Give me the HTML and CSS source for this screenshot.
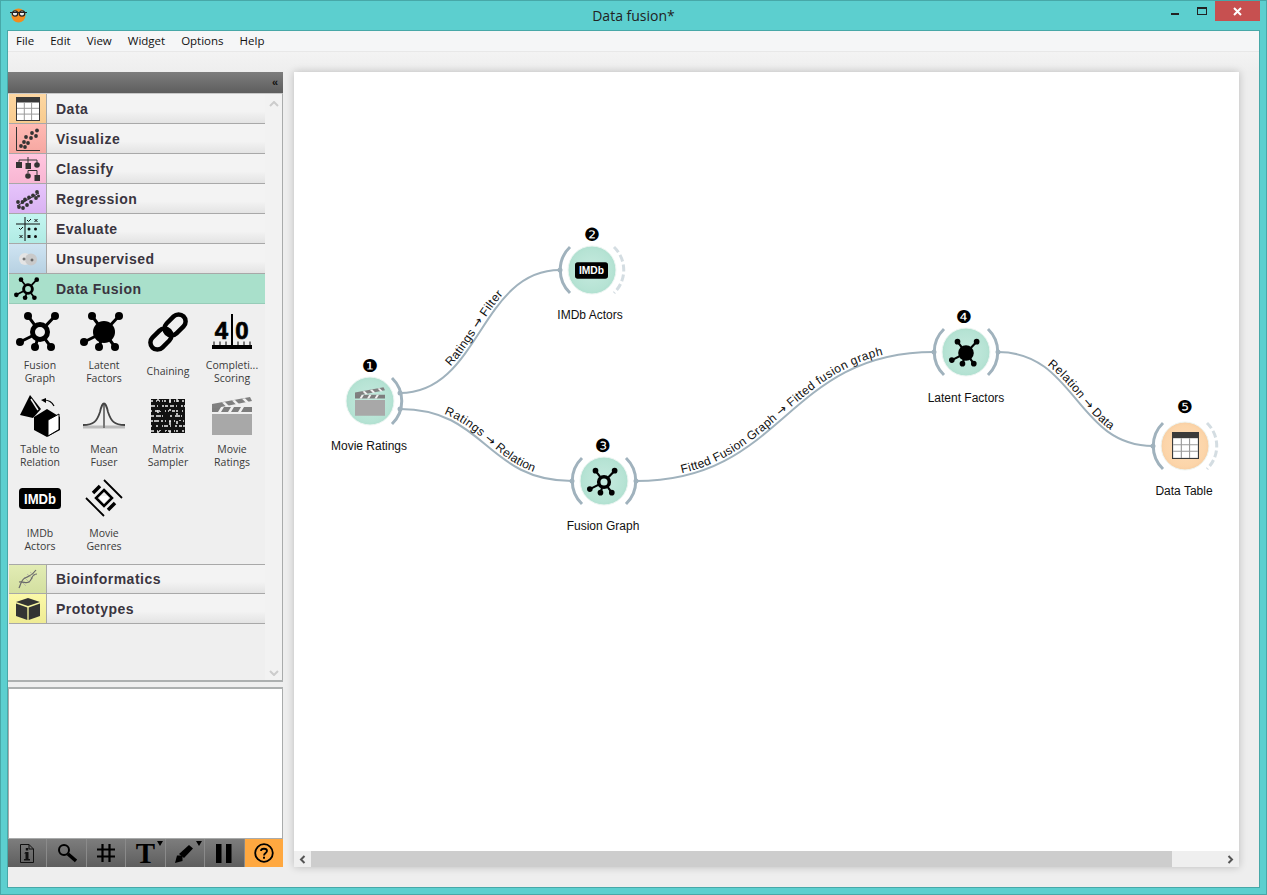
FILE: index.html
```html
<!DOCTYPE html>
<html lang="en">
<head>
    <meta charset="UTF-8">
    <title>Data fusion*</title>
    <link rel="stylesheet" href="styles.css">
</head>
<body>
<svg class="defs" width="0" height="0">
    <defs>
        <symbol id="fusion" viewBox="0 0 48 48">
            <path d="M18.600 16.800L12 8M30.200 17.400L39 8M16 28L4 34M21.200 32.500L19 39M29.300 31.300L35 39" stroke="#000" stroke-width="3"/>
            <circle cx="24" cy="24" r="7.500" fill="none" stroke="#000" stroke-width="5"/>
            <circle cx="12" cy="8" r="4"/><circle cx="39" cy="8" r="4"/><circle cx="4" cy="34" r="4"/>
            <circle cx="19" cy="39" r="4"/><circle cx="35" cy="39" r="4"/>
        </symbol>
        <symbol id="latent" viewBox="0 0 48 48">
            <path d="M24 24L12 8M24 24L39 8M24 24L4 34M24 24L19 39M24 24L35 39" stroke="#000" stroke-width="3"/>
            <circle cx="24" cy="24" r="11"/>
            <circle cx="12" cy="8" r="4"/><circle cx="39" cy="8" r="4"/><circle cx="4" cy="34" r="4"/>
            <circle cx="19" cy="39" r="4"/><circle cx="35" cy="39" r="4"/>
        </symbol>
        <symbol id="clapper" viewBox="0 0 40 38">
            <rect x="0" y="17" width="40" height="21" fill="#a8a8a8"/>
            <path d="M0 10H40V15H0Z" fill="#7d7d7d"/>
            <path d="M9 10l-3 5h3l3-5zM19 10l-3 5h3l3-5zM29 10l-3 5h3l3-5z" fill="#f1f1f1"/>
            <path d="M0 7l38-7 2 4-36 7-4 0z" fill="#808080"/>
            <path d="M10 5.500l4 4 3-.6-4-4zM20 3.600l4 4 3-.6-4-4zM30 1.800l4 4 3-.6-4-4z" fill="#f1f1f1"/>
        </symbol>
        <symbol id="imdb" viewBox="0 0 42 21">
            <rect width="42" height="21" rx="3.500"/>
            <text class="imdb-text" x="21" y="15.500" text-anchor="middle" textLength="32" lengthAdjust="spacingAndGlyphs">IMDb</text>
        </symbol>
        <symbol id="table" viewBox="0 0 24 24">
            <rect width="24" height="24" fill="#3a3a3a"/>
            <rect x="1" y="5.500" width="22" height="17.500" fill="#fff"/>
            <path d="M8.300 5.500V23M15.600 5.500V23M1 11.300H23M1 17.100H23" stroke="#9a9a9a" stroke-width="1"/>
        </symbol>
    </defs>
</svg>

<div class="window">
    <header class="titlebar">
        <svg class="app-icon" width="17" height="15" viewBox="0 0 17 15">
            <circle cx="8.500" cy="7.500" r="7" fill="#f28c1e"/>
            <circle cx="5" cy="5.500" r="2.700" fill="#eee" stroke="#222" stroke-width="1.200"/>
            <circle cx="12" cy="5.500" r="2.700" fill="#eee" stroke="#222" stroke-width="1.200"/>
            <path d="M0 4.500H17" stroke="#222"/>
        </svg>
        <span class="title">Data fusion*</span>
        <div class="win-btn min"><i></i></div>
        <div class="win-btn max"><i></i></div>
        <div class="win-btn close">
            <svg width="9" height="9" viewBox="0 0 9 9"><path d="M1 1L8 8M8 1L1 8" stroke="#fff" stroke-width="2"/></svg>
        </div>
    </header>

    <div class="client">
        <nav class="menubar">
            <span>File</span><span>Edit</span><span>View</span><span>Widget</span><span>Options</span><span>Help</span>
        </nav>

        <div class="main">
            <aside class="dock">
                <div class="dock-head">«</div>
                <div class="toolbox">
                    <div class="tool-list">
                        <div class="cat"><div class="cat-icon c-data"><svg width="24" height="24"><use href="#table"/></svg></div><span>Data</span></div>
                        <div class="cat"><div class="cat-icon c-vis">
                            <svg width="24" height="24" viewBox="0 0 24 24">
                                <path d="M.5 0V23.500H24" fill="none" stroke="#333"/>
                                <g fill="#333"><circle cx="5" cy="19" r="1.900"/><circle cx="9" cy="20" r="1.900"/><circle cx="8" cy="15" r="1.900"/><circle cx="12" cy="16" r="1.900"/><circle cx="10" cy="10" r="1.900"/><circle cx="15" cy="11" r="1.900"/><circle cx="16" cy="6" r="1.900"/><circle cx="20" cy="9" r="1.900"/><circle cx="21" cy="3.500" r="1.900"/></g>
                            </svg></div><span>Visualize</span></div>
                        <div class="cat"><div class="cat-icon c-cls">
                            <svg width="24" height="24" viewBox="0 0 24 24">
                                <path d="M3 7V3H21V7M12 0V8M12 16V13.500H21V18" fill="none" stroke="#333"/>
                                <g fill="#333"><rect x="0" y="5" width="6" height="6"/><rect x="9.500" y="6" width="5.500" height="6"/><circle cx="21" cy="8" r="2.800"/><circle cx="12" cy="19" r="2.800"/><rect x="18.500" y="18" width="5.500" height="6"/></g>
                            </svg></div><span>Classify</span></div>
                        <div class="cat"><div class="cat-icon c-reg">
                            <svg width="24" height="24" viewBox="0 0 24 24">
                                <path d="M1 19L23 6" stroke="#333" stroke-width="1"/>
                                <g fill="#333"><circle cx="2" cy="15" r="1.900"/><circle cx="3" cy="20" r="1.900"/><circle cx="6.500" cy="15" r="1.900"/><circle cx="7" cy="21" r="1.900"/><circle cx="9" cy="12.500" r="1.900"/><circle cx="11" cy="18" r="1.900"/><circle cx="13" cy="10.500" r="1.900"/><circle cx="15" cy="15" r="1.900"/><circle cx="17" cy="8.500" r="1.900"/><circle cx="20" cy="11" r="1.900"/><circle cx="21" cy="5" r="1.900"/><circle cx="22.500" cy="9" r="1.500"/></g>
                            </svg></div><span>Regression</span></div>
                        <div class="cat"><div class="cat-icon c-eval">
                            <svg width="24" height="24" viewBox="0 0 24 24">
                                <path d="M0 7H24M9 0V24" stroke="#111" stroke-width="1"/>
                                <path d="M11 3l1.500 1.500L15 2M3 11l1.500 1.500L7 10" fill="none" stroke="#111"/>
                                <path d="M18.500 2l3 3M21.500 2l-3 3M3.500 18l3 3M6.500 18l-3 3" stroke="#111"/>
                                <g fill="#111"><circle cx="13" cy="12" r="1.500"/><circle cx="19.500" cy="12" r="1.500"/><rect x="11.500" y="18" width="3" height="3"/><circle cx="19.500" cy="19.500" r="1.500"/></g>
                            </svg></div><span>Evaluate</span></div>
                        <div class="cat"><div class="cat-icon c-uns">
                            <svg width="24" height="24" viewBox="0 0 24 24">
                                <circle cx="9" cy="12" r="6" fill="#e4e4e4"/><circle cx="15" cy="12.500" r="6" fill="#c9c9c9"/>
                                <path d="M6.500 12h3M8 10.500v3M14.500 13h3M16 11.500v3" stroke="#333" stroke-width=".8"/>
                            </svg></div><span>Unsupervised</span></div>
                        <div class="cat cat-open"><div class="cat-icon"><svg width="28" height="28"><use href="#fusion"/></svg></div><span>Data Fusion</span></div>

                        <div class="widgets">
                            <div class="widget"><div class="w-icon"><svg width="48" height="48"><use href="#fusion"/></svg></div><div class="w-label">Fusion<br>Graph</div></div>
                            <div class="widget"><div class="w-icon"><svg width="48" height="48"><use href="#latent"/></svg></div><div class="w-label">Latent<br>Factors</div></div>
                            <div class="widget"><div class="w-icon">
                                <svg width="42" height="42" viewBox="0 0 42 42"><g fill="none" stroke="#000" stroke-width="4.500" transform="rotate(-45 21 21)"><rect x="-1" y="14" width="24" height="14" rx="7"/><rect x="19" y="14" width="24" height="14" rx="7"/></g></svg>
                            </div><div class="w-label">Chaining</div></div>
                            <div class="widget"><div class="w-icon">
                                <svg width="40" height="36" viewBox="0 0 40 36">
                                    <text class="score" x="9.500" y="25" text-anchor="middle">4</text>
                                    <text class="score" x="30" y="25" text-anchor="middle">0</text>
                                    <path d="M20 0V34" stroke="#000" stroke-width="2"/>
                                    <rect x="0" y="31" width="40" height="4"/>
                                    <path d="M2 27.500V31M8 27.500V31M14 27.500V31M26 27.500V31M32 27.500V31M38 27.500V31" stroke="#000"/>
                                </svg></div><div class="w-label">Completi...<br>Scoring</div></div>

                            <div class="widget"><div class="w-icon">
                                <svg width="42" height="42" viewBox="0 0 42 42">
                                    <path d="M11 0L1 20L14 23L22 14Z" fill="#000"/>
                                    <path d="M12 4L19 15" stroke="#f0f0f0" stroke-width="1.500"/>
                                    <path d="M25 5C29 5 33 7 35 11" fill="none" stroke="#000" stroke-width="1.200"/>
                                    <path d="M22 5l5-2v5z"/>
                                    <path d="M28 14L41 22V35L28 42L15 35V22Z" fill="#000"/>
                                    <path d="M29 25L40 19V34.500L29 41Z" fill="#fff" stroke="#000"/>
                                </svg></div><div class="w-label">Table to<br>Relation</div></div>
                            <div class="widget"><div class="w-icon">
                                <svg width="42" height="28" viewBox="0 0 42 28">
                                    <path d="M0 25H42" stroke="#bbb" stroke-width="3"/>
                                    <path d="M21 1V26" stroke="#777" stroke-width="2"/>
                                    <path d="M0 23C11 23 14 19 17 10C18 5 20 1.500 21 1.500C22 1.500 24 5 25 10C28 19 31 23 42 23" fill="none" stroke="#444" stroke-width="1.800"/>
                                </svg></div><div class="w-label">Mean<br>Fuser</div></div>
                            <div class="widget"><div class="w-icon">
                                <svg width="34" height="34" viewBox="0 0 34 34">
                                    <rect width="34" height="34" fill="#111"/>
                                    <g stroke="#eee" fill="none" stroke-width="1.500">
                                        <path d="M0 2H34" stroke-dasharray="2 3 1 2 4 1 2 3"/>
                                        <path d="M0 7H34" stroke-dasharray="4 2 1 4 2 1 3 2"/>
                                        <path d="M0 12H34" stroke-dasharray="1 3 3 1 2 4 1 2"/>
                                        <path d="M0 17H34" stroke-dasharray="3 2 5 1 1 3 2 2"/>
                                        <path d="M0 22H34" stroke-dasharray="2 1 3 4 2 2 1 3"/>
                                        <path d="M0 27H34" stroke-dasharray="1 4 2 2 3 1 4 2"/>
                                        <path d="M0 32H34" stroke-dasharray="3 3 1 1 2 4 2 1"/>
                                    </g>
                                    <g stroke="#111" fill="none" stroke-width="2">
                                        <path d="M4 0V34" stroke-dasharray="3 5 2 4 6 3"/>
                                        <path d="M10 0V34" stroke-dasharray="5 3 4 6 2 4"/>
                                        <path d="M16 0V34" stroke-dasharray="2 6 3 3 5 5"/>
                                        <path d="M22 0V34" stroke-dasharray="4 4 2 5 3 2"/>
                                        <path d="M29 0V34" stroke-dasharray="3 3 6 2 2 6"/>
                                    </g>
                                    <g stroke="#eee" fill="none" stroke-width="1.500">
                                        <path d="M7 0V34" stroke-dasharray="2 9 3 7"/>
                                        <path d="M19 0V34" stroke-dasharray="4 6 2 10"/>
                                        <path d="M26 0V34" stroke-dasharray="3 11 2 6"/>
                                    </g>
                                </svg></div><div class="w-label">Matrix<br>Sampler</div></div>
                            <div class="widget"><div class="w-icon"><svg width="40" height="38"><use href="#clapper"/></svg></div><div class="w-label">Movie<br>Ratings</div></div>

                            <div class="widget"><div class="w-icon"><svg class="w-imdb" width="42" height="21"><use href="#imdb"/></svg></div><div class="w-label">IMDb<br>Actors</div></div>
                            <div class="widget"><div class="w-icon">
                                <svg class="w-genres" width="38" height="38" viewBox="0 0 38 38">
                                    <path d="M1 19L19 37M19 1L37 19" stroke="#000" stroke-width="1.800"/>
                                    <path d="M8 14L15 7M23 31L30 24" stroke="#000" stroke-width="3.500"/>
                                    <path d="M19 11L27 19L19 27L11 19Z" fill="none" stroke="#000" stroke-width="2.500"/>
                                    <path d="M15 17h8v3l-4 4-4-4z" fill="#fff"/>
                                </svg></div><div class="w-label">Movie<br>Genres</div></div>
                        </div>

                        <div class="cat"><div class="cat-icon c-bio">
                            <svg width="24" height="24" viewBox="0 0 24 24">
                                <path d="M5 14l5 5M8 10l6 6M11 7l6 5M14 5l5 4" stroke="#b5b5a5" stroke-width=".9"/>
                                <path d="M3 21C5 17 5 13 9 11S16 9 20 3" fill="none" stroke="#6a6a6a" stroke-width="1.200"/>
                                <path d="M3 15C8 14 11 18 14 14S16 7 21 7" fill="none" stroke="#6a6a6a" stroke-width="1.200"/>
                            </svg></div><span>Bioinformatics</span></div>
                        <div class="cat"><div class="cat-icon c-pro">
                            <svg width="24" height="22" viewBox="0 0 24 22">
                                <path d="M12 0L24 4L12 8L0 4Z" fill="#333"/>
                                <path d="M0 5.500L11.300 9.500V22L0 18Z" fill="#333"/>
                                <path d="M24 5.500L12.700 9.500V22L24 18Z" fill="#333"/>
                            </svg></div><span>Prototypes</span></div>
                    </div>
                    <div class="vscroll">
                        <svg width="10" height="6" viewBox="0 0 10 6"><path d="M1 5L5 1L9 5" fill="none" stroke="#ccc" stroke-width="2"/></svg>
                        <svg width="10" height="6" viewBox="0 0 10 6"><path d="M1 1L5 5L9 1" fill="none" stroke="#ccc" stroke-width="2"/></svg>
                    </div>
                </div>
                <div class="splitter"></div>
                <div class="info-box"></div>
                <div class="dock-tools">
                    <div class="tool">
                        <svg width="14" height="19" viewBox="0 0 14 19"><path d="M.5.500H9L13.500 5V18.500H.5Z" fill="none" stroke="#111"/><path d="M9 .5V5H13.500" fill="none" stroke="#111"/><path d="M5.500 8h3v7h1.500v1.500H4V15h1.500V9.500H4zM5.800 4h2.500v2.500H5.800z" fill="#111"/></svg>
                    </div>
                    <div class="tool">
                        <svg width="20" height="20" viewBox="0 0 20 20"><circle cx="7" cy="7" r="5" fill="none" stroke="#000" stroke-width="2"/><path d="M11 11L19 18" stroke="#000" stroke-width="3.500"/></svg>
                    </div>
                    <div class="tool">
                        <svg width="20" height="20" viewBox="0 0 20 20"><path d="M6.500 1V19M13.500 1V19M1 6.500H19M1 13.500H19" stroke="#000" stroke-width="2.200"/></svg>
                    </div>
                    <div class="tool">
                        <span class="tool-t">T</span><i class="caret"></i>
                    </div>
                    <div class="tool">
                        <svg width="20" height="20" viewBox="0 0 20 20"><path d="M0 20L2 12.500L7.500 12.500L7.500 18Z" fill="#000"/><path d="M4 11L14 2L18 5.500L9 15Z" fill="#000"/></svg><i class="caret"></i>
                    </div>
                    <div class="tool">
                        <svg width="16" height="19" viewBox="0 0 16 19"><rect width="5.500" height="19"/><rect x="10" width="5.500" height="19"/></svg>
                    </div>
                    <div class="tool tool-help">
                        <svg width="20" height="20" viewBox="0 0 20 20"><circle cx="10" cy="10" r="8.800" fill="none" stroke="#000" stroke-width="1.800"/><path d="M7 8C7 5 13 5 13 8C13 10 10 10 10 12.500" fill="none" stroke="#000" stroke-width="1.800"/><rect x="9" y="13.700" width="2" height="2"/></svg>
                    </div>
                </div>
            </aside>

            <section class="canvas">
                <svg class="scheme" viewBox="294 72 945 779" width="945" height="779">
                    <defs>
                        <radialGradient id="green"><stop offset="0" stop-color="#c6eadf"/><stop offset=".85" stop-color="#b6e3d4"/><stop offset="1" stop-color="#b0e0d0"/></radialGradient>
                        <radialGradient id="peach"><stop offset="0" stop-color="#fddcb8"/><stop offset=".85" stop-color="#fcd5a9"/><stop offset="1" stop-color="#f8cfa4"/></radialGradient>
                    </defs>

                    <g class="links">
                        <path id="l1" d="M400 393C480 393 480 270 560 270"/>
                        <path id="l2" d="M400 409C486 409 486 481 572 481"/>
                        <path id="l3" d="M636 481C785 481 785 352 934 352"/>
                        <path id="l4" d="M998 352C1076 352 1076 446 1153 446"/>
                    </g>
                    <g class="link-labels">
                        <text dy="-3"><textPath href="#l1" startOffset="49.500%">Ratings <tspan class="arr">→</tspan> Filter</textPath></text>
                        <text dy="-3"><textPath href="#l2" startOffset="51%">Ratings <tspan class="arr">→</tspan> Relation</textPath></text>
                        <text dy="-3"><textPath href="#l3" startOffset="49.500%">Fitted Fusion Graph <tspan class="arr">→</tspan> Fitted fusion graph</textPath></text>
                        <text dy="-3"><textPath href="#l4" startOffset="51%">Relation <tspan class="arr">→</tspan> Data</textPath></text>
                    </g>

                    <!-- Movie Ratings -->
                    <g class="arc"><path d="M392 378A32 32 0 0 1 392 424"/></g>
                    <circle class="dot" cx="400" cy="393" r="2.500"/><circle class="dot" cx="400" cy="409" r="2.500"/>
                    <circle class="node" cx="370" cy="401" r="24" fill="url(#green)"/>
                    <use href="#clapper" x="355" y="387" width="30" height="29"/>
                    <text class="badge" x="370" y="372">❶</text>
                    <text class="name" x="369" y="450">Movie Ratings</text>

                    <!-- IMDb Actors -->
                    <g class="arc"><path d="M570 247A32 32 0 0 0 570 293"/></g>
                    <path class="arc-off" d="M614 247A32 32 0 0 1 614 293"/>
                    <circle class="dot" cx="560" cy="270" r="2.500"/>
                    <circle class="node" cx="592" cy="270" r="24" fill="url(#green)"/>
                    <use href="#imdb" x="575" y="262" width="33" height="17"/>
                    <text class="badge" x="592" y="241">❷</text>
                    <text class="name" x="590" y="319">IMDb Actors</text>

                    <!-- Fusion Graph -->
                    <g class="arc"><path d="M582 458A32 32 0 0 0 582 504"/><path d="M626 458A32 32 0 0 1 626 504"/></g>
                    <circle class="dot" cx="572" cy="481" r="2.500"/><circle class="dot" cx="636" cy="481" r="2.500"/>
                    <circle class="node" cx="604" cy="481" r="24" fill="url(#green)"/>
                    <use href="#fusion" x="587" y="465" width="34" height="34"/>
                    <text class="badge" x="603" y="452">❸</text>
                    <text class="name" x="603" y="530">Fusion Graph</text>

                    <!-- Latent Factors -->
                    <g class="arc"><path d="M944 329A32 32 0 0 0 944 375"/><path d="M988 329A32 32 0 0 1 988 375"/></g>
                    <circle class="dot" cx="934" cy="352" r="2.500"/><circle class="dot" cx="998" cy="352" r="2.500"/>
                    <circle class="node" cx="966" cy="352" r="24" fill="url(#green)"/>
                    <use href="#latent" x="949" y="336" width="34" height="34"/>
                    <text class="badge" x="964" y="323">❹</text>
                    <text class="name" x="966" y="402">Latent Factors</text>

                    <!-- Data Table -->
                    <g class="arc"><path d="M1163 423A32 32 0 0 0 1163 469"/></g>
                    <path class="arc-off" d="M1207 423A32 32 0 0 1 1207 469"/>
                    <circle class="dot" cx="1153" cy="446" r="2.500"/>
                    <circle class="node" cx="1185" cy="446" r="24" fill="url(#peach)"/>
                    <use href="#table" x="1172" y="432" width="27" height="27"/>
                    <text class="badge" x="1185" y="413">❺</text>
                    <text class="name" x="1184" y="495">Data Table</text>
                </svg>
                <div class="hscroll">
                    <div class="arrow"><svg width="7" height="9" viewBox="0 0 7 9"><path d="M5.500 1L2 4.500L5.500 8" fill="none" stroke="#555" stroke-width="2"/></svg></div>
                    <div class="thumb"></div>
                    <div class="arrow right"><svg width="7" height="9" viewBox="0 0 7 9"><path d="M1.500 1L5 4.500L1.500 8" fill="none" stroke="#555" stroke-width="2"/></svg></div>
                </div>
            </section>
        </div>
    </div>
</div>
</body>
</html>
```

FILE: styles.css
```css
*{
    margin: 0;
    box-sizing: border-box;
}
body
{
    margin: 0;
    overflow: hidden;
    background: #5ccfcf;
}
.defs
{
    position: absolute;
}
.window
{
    width: 1267px;
    height: 895px;
    display: flex;
    flex-direction: column;
    background: #5ccfcf;
    border: 1px solid #47a8a8;
}
.titlebar
{
    height: 30px;
    flex: none;
    display: flex;
    position: relative;
}
.app-icon
{
    position: absolute;
    left: 9px;
    top: 7px;
}
.title
{
    width: 100%;
    text-align: center;
    font: 14px/30px "Open Sans", sans-serif;
    color: #222;
}
.win-btn
{
    position: absolute;
    top: 0;
}
.min
{
    left: 1170px;
    top: 12px;
}
.min i
{
    display: block;
    width: 8px;
    height: 2px;
    background: #222;
}
.max
{
    left: 1196px;
    top: 6px;
}
.max i
{
    display: block;
    width: 10px;
    height: 8px;
    border: 1px solid #222;
    border-top-width: 2px;
}
.close
{
    left: 1214px;
    width: 45px;
    height: 20px;
    background: #c75050;
    display: flex;
    align-items: center;
    justify-content: center;
}
.client
{
    flex: 1;
    margin: 0 7px 7px;
    display: flex;
    flex-direction: column;
    background: #eeeeee;
    box-shadow: 0 0 0 1px #47a8a8;
}
.menubar
{
    height: 21px;
    flex: none;
    display: flex;
    gap: 16px;
    padding-left: 8px;
    background: #f5f6f7;
    border-bottom: 1px solid #e8e8e8;
    font: 11.5px/20px "Open Sans", sans-serif;
    color: #111;
}
.main
{
    flex: 1;
    display: flex;
    gap: 11px;
    padding: 20px 20px 20px 0;
    background: linear-gradient(#f3f3f3, #eeeeee 20px);
}
.dock
{
    width: 275px;
    display: flex;
    flex-direction: column;
}
.dock-head
{
    height: 21px;
    flex: none;
    background: linear-gradient(#7d7d7d, #5e5e5e);
    font: bold 11px/21px "Liberation Sans", sans-serif;
    color: #111;
    text-align: right;
    padding-right: 5px;
}
.toolbox
{
    height: 588px;
    flex: none;
    display: flex;
    border-top: 1px solid #c8c8c8;
    border-right: 1px solid #a9abab;
    background: #efefef;
    padding-left: 1px;
}
.tool-list
{
    width: 256px;
    flex: none;
}
.cat
{
    height: 30px;
    display: flex;
    align-items: center;
    border-bottom: 1px solid #a8a8a8;
    background: linear-gradient(#f3f3f3 60%, #e3e3e3);
    font: bold 14px "Liberation Sans", sans-serif;
    letter-spacing: .5px;
    color: #3a3540;
}
.cat-icon
{
    width: 38px;
    height: 100%;
    flex: none;
    display: flex;
    align-items: center;
    justify-content: center;
    border-right: 1px solid #a8a8a8;
    margin-right: 9px;
}
.c-data { background: linear-gradient(#fdd7a2, #f8cb8e); }
.c-vis { background: linear-gradient(#ffbab4, #f6a7a1); }
.c-cls { background: linear-gradient(#ffc6e0, #f8b6d2); }
.c-reg { background: linear-gradient(#e6c4fb, #d9b2f2); }
.c-eval { background: linear-gradient(#c4f5f0, #b0ebe4); }
.c-uns { background: linear-gradient(#cfe4f2, #b7d1e2); }
.c-bio { background: linear-gradient(#e2ecb4, #d3dfa0); }
.c-pro { background: linear-gradient(#fbf9a8, #efeb94); }
.cat-open
{
    background: #a9e0cb;
    border-bottom-color: #97ccb8;
}
.cat-open .cat-icon
{
    background: transparent;
    border-right: 0;
}
.widgets
{
    height: 260px;
    display: grid;
    grid-template-columns: repeat(4, 64px);
    grid-auto-rows: 84px;
    align-content: start;
    margin-left: -1px;
    padding-top: 4px;
}
.widgets + .cat
{
    border-top: 1px solid #a8a8a8;
}
.widget
{
    display: flex;
    flex-direction: column;
    align-items: center;
}
.w-icon
{
    height: 48px;
    display: flex;
    align-items: center;
    justify-content: center;
    flex: none;
}
.w-imdb,
.w-genres
{
    margin-bottom: 4px;
}
.w-label
{
    height: 27px;
    margin-top: 2px;
    display: flex;
    align-items: center;
    text-align: center;
    font: 10.5px/13px "Open Sans", sans-serif;
    color: #3a3a3a;
}
.imdb-text
{
    font: bold 14px "Liberation Sans", sans-serif;
    fill: #fff;
}
.score
{
    font: bold 24px "Liberation Sans", sans-serif;
    stroke: #000;
    stroke-width: .7px;
}
.vscroll
{
    flex: 1;
    display: flex;
    flex-direction: column;
    justify-content: space-between;
    align-items: center;
    padding: 7px 0 5px;
    background: #f2f2f2;
}
.splitter
{
    height: 9px;
    flex: none;
    border-top: 2px solid #adb0b0;
    border-bottom: 2px solid #adb0b0;
    background: #efefef;
    margin-top: -1px;
}
.info-box
{
    flex: 1;
    background: #fff;
    border-left: 1px solid #a9abab;
    border-right: 1px solid #a9abab;
    border-bottom: 1px solid #a9abab;
}
.dock-tools
{
    height: 28px;
    flex: none;
    display: flex;
    background: linear-gradient(#7d7d7d, #5e5e5e);
}
.tool
{
    flex: 1;
    display: flex;
    align-items: center;
    justify-content: center;
    position: relative;
    border-right: 1px solid #8a8a8a;
}
.tool-t
{
    font: bold 29px/28px "Liberation Serif", serif;
    color: #000;
}
.caret
{
    position: absolute;
    right: 2px;
    top: 2px;
    border: 3px solid transparent;
    border-top: 5px solid #000;
    border-bottom: 0;
}
.tool-help
{
    background: #ffa840;
    border-right: 0;
}
.canvas
{
    flex: 1;
    display: flex;
    flex-direction: column;
    background: #fff;
    box-shadow: 0 0 8px rgba(0, 0, 0, .22);
}
.scheme
{
    display: block;
    flex: none;
}
.links path
{
    fill: none;
    stroke: #a0b2bd;
    stroke-width: 2;
}
.link-labels text
{
    font: 12px "Liberation Sans", sans-serif;
    letter-spacing: .35px;
    text-anchor: middle;
    fill: #111;
}
.arr
{
    font-family: "DejaVu Sans", sans-serif;
}
.arc path
{
    fill: none;
    stroke: #a0b2bd;
    stroke-width: 3;
}
.arc-off
{
    fill: none;
    stroke: #d4dde2;
    stroke-width: 3;
    stroke-dasharray: 7 3;
}
.dot
{
    fill: #a0b2bd;
}
.node
{
    stroke: #eef6f3;
    stroke-width: 1;
}
.badge
{
    font: 18px "DejaVu Sans", sans-serif;
    text-anchor: middle;
    fill: #000;
}
.name
{
    font: 12px "Liberation Sans", sans-serif;
    text-anchor: middle;
    fill: #111;
}
.hscroll
{
    flex: 1;
    display: flex;
    background: #efefef;
}
.arrow
{
    width: 17px;
    flex: none;
    display: flex;
    align-items: center;
    justify-content: center;
}
.arrow.right
{
    margin-left: auto;
}
.thumb
{
    width: 861px;
    background: #cdcdcd;
}
```
